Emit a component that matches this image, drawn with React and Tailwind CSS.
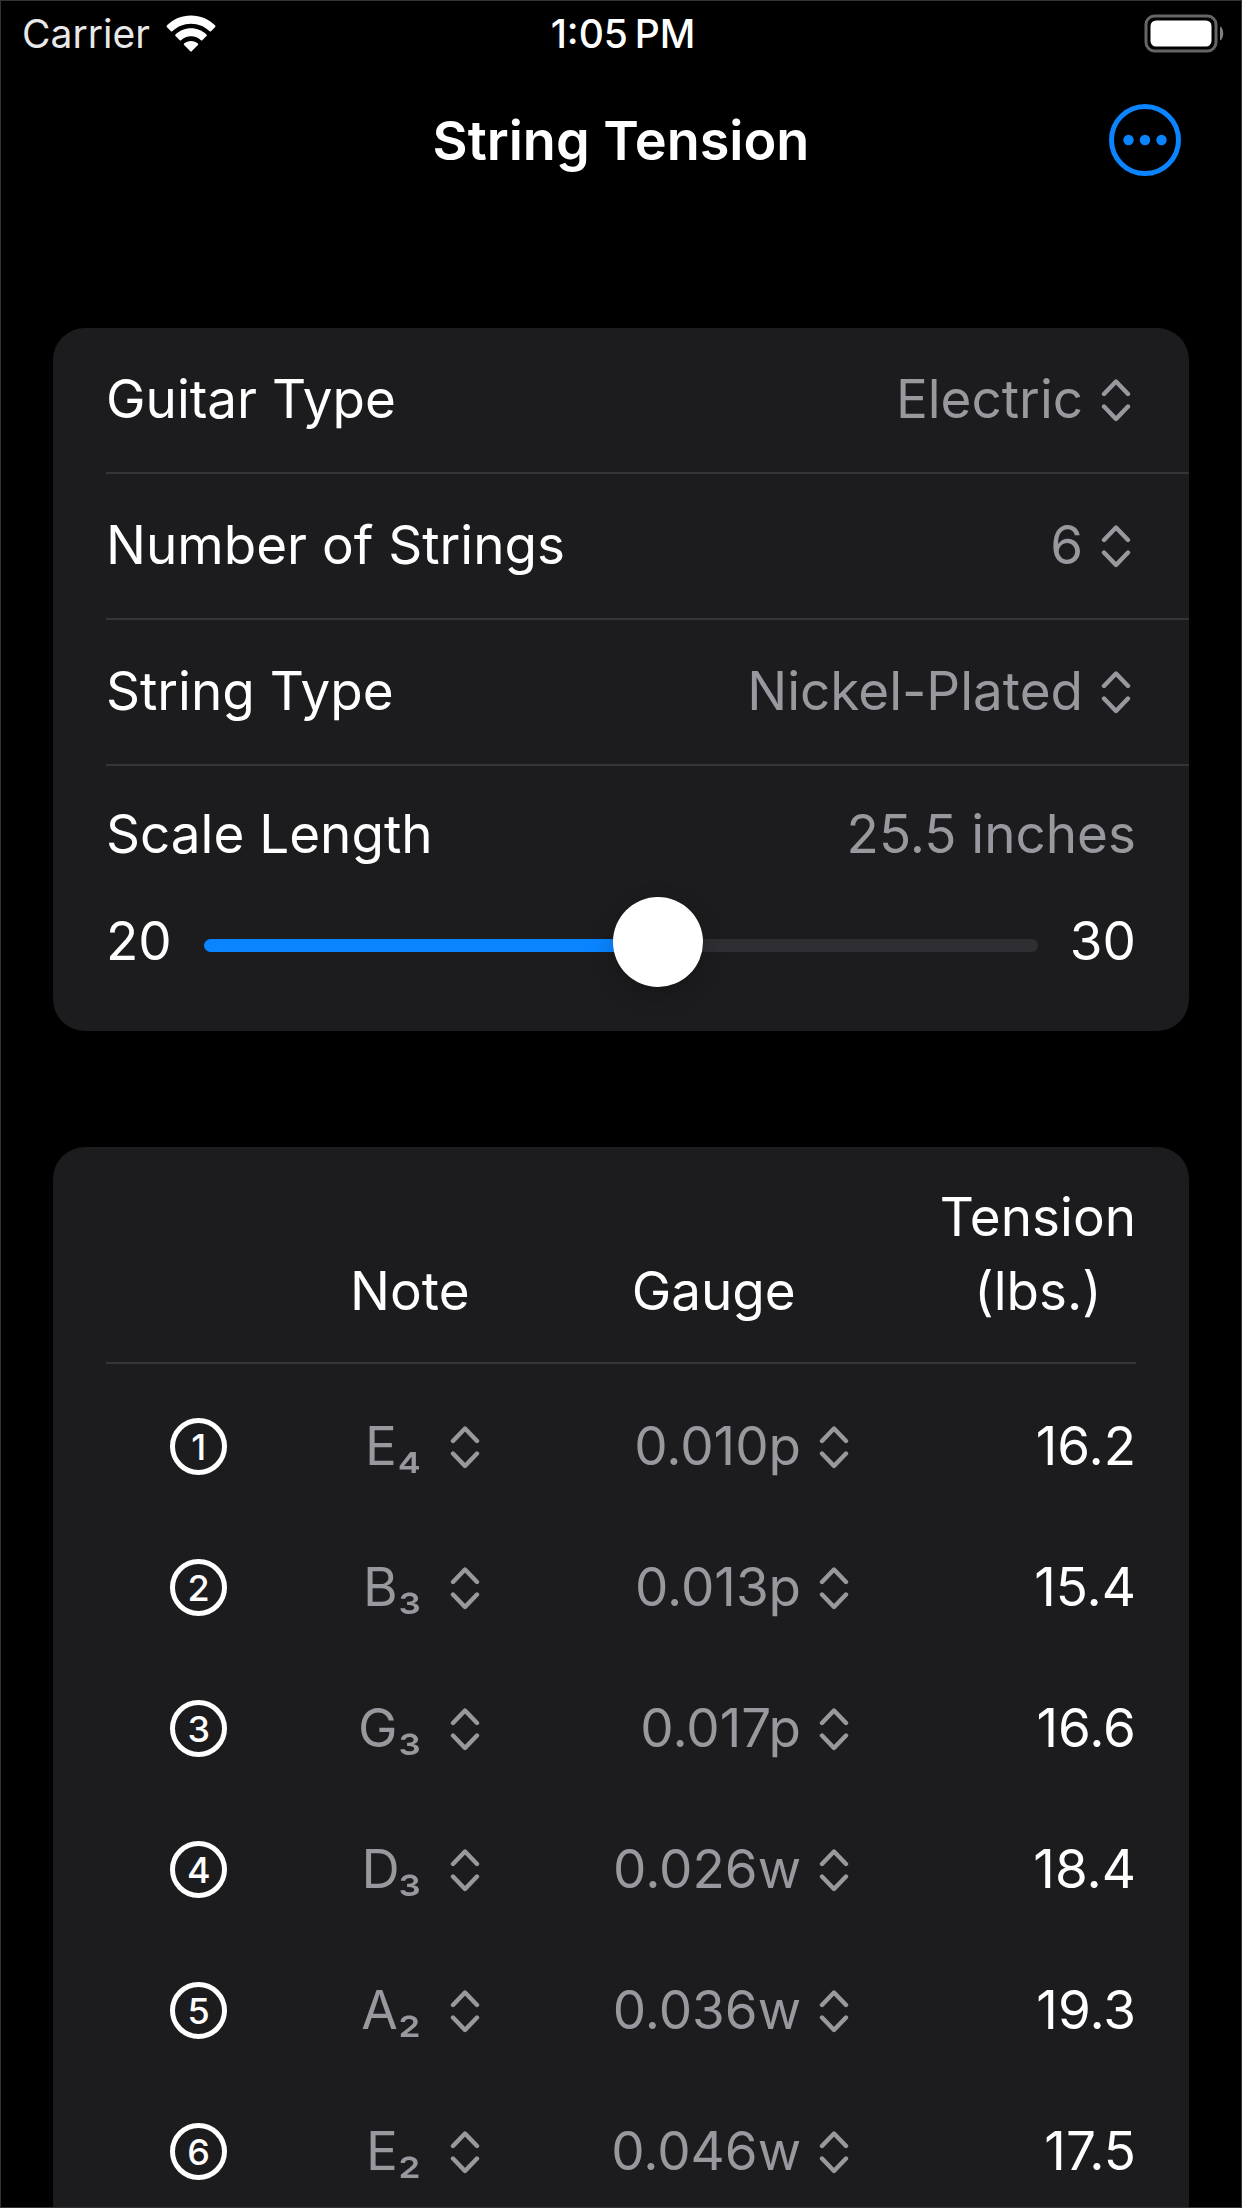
import { useState } from "react";

const noteOptions = ["E₂", "A₂", "D₃", "G₃", "B₃", "E₄"];
const gaugeOptions = ["0.010p", "0.013p", "0.017p", "0.026w", "0.036w", "0.046w"];

const strings = [
  { number: 1, note: "E₄", gauge: "0.010p", tension: "16.2" },
  { number: 2, note: "B₃", gauge: "0.013p", tension: "15.4" },
  { number: 3, note: "G₃", gauge: "0.017p", tension: "16.6" },
  { number: 4, note: "D₃", gauge: "0.026w", tension: "18.4" },
  { number: 5, note: "A₂", gauge: "0.036w", tension: "19.3" },
  { number: 6, note: "E₂", gauge: "0.046w", tension: "17.5" },
];

function WifiIcon() {
  return (
    <svg width="50" height="38" viewBox="0 0 50 38" fill="#fff" aria-hidden="true">
      <path d="M25 0.5C34.300 0.500 42.900 4.200 49 10.300Q50 11.300 49 12.300L45 16.300Q44.400 16.900 43.700 16.300C38.800 11.500 32.200 8.700 25 8.700C17.800 8.700 11.200 11.500 6.300 16.300Q5.600 16.900 5 16.300L1 12.300Q0 11.300 1 10.300C7.100 4.200 15.700 0.500 25 0.500Z" />
      <path d="M25 13.300C31 13.300 36.500 15.700 40.500 19.500Q41.300 20.300 40.500 21.100L36.300 25.200Q35.600 25.800 34.900 25.200C32.300 22.800 28.800 21.300 25 21.300C21.200 21.300 17.700 22.800 15.100 25.200Q14.400 25.800 13.700 25.200L9.500 21.100Q8.700 20.300 9.500 19.500C13.500 15.700 19 13.300 25 13.300Z" />
      <path d="M25 26C27.700 26 30.100 27 31.900 28.600Q32.600 29.300 31.900 30L25.700 36.300Q25 37 24.300 36.300L18.100 30Q17.400 29.300 18.100 28.600C19.900 27 22.300 26 25 26Z" />
    </svg>
  );
}

function BatteryIcon() {
  return (
    <svg width="80" height="40" viewBox="0 0 80 40" role="img" aria-label="Battery full">
      <rect x="2" y="2" width="70" height="35" rx="8.500" fill="none" stroke="#666" strokeWidth="3" />
      <rect x="6.500" y="6.500" width="61" height="26" rx="5.500" fill="#fff" />
      <path d="M76 12.500C80.300 14.500 80.300 24.500 76 26.500Z" fill="#808080" />
    </svg>
  );
}

function MoreIcon() {
  return (
    <svg width="72" height="72" viewBox="0 0 72 72" aria-hidden="true">
      <circle cx="36" cy="36" r="33.500" fill="none" stroke="#0a84ff" strokeWidth="5" />
      <circle cx="19.500" cy="36" r="5.200" fill="#0a84ff" />
      <circle cx="36" cy="36" r="5.200" fill="#0a84ff" />
      <circle cx="52.500" cy="36" r="5.200" fill="#0a84ff" />
    </svg>
  );
}

function ChevronsIcon() {
  return (
    <svg
      className="pointer-events-none absolute right-[5px]"
      width="30"
      height="44"
      viewBox="0 0 30 44"
      fill="none"
      stroke="#98989f"
      strokeWidth="4.4"
      strokeLinecap="round"
      strokeLinejoin="round"
      aria-hidden="true"
    >
      <path d="M3 16L15 3.500L27 16" />
      <path d="M3 28.500L15 41L27 28.500" />
    </svg>
  );
}

function Picker({ id, label, value, options, wide = false }) {
  const [selected, setSelected] = useState(value);
  return (
    <span className="relative inline-flex items-center">
      <select
        id={id}
        aria-label={label}
        value={selected}
        onChange={(e) => setSelected(e.target.value)}
        className={`field-sizing-content cursor-pointer appearance-none bg-transparent text-right text-[#98989f] outline-none ${wide ? "pr-[64px]" : "pr-[53px]"}`}
      >
        {options.map((option) => (
          <option key={option}>{option}</option>
        ))}
      </select>
      <ChevronsIcon />
    </span>
  );
}

function SettingRow({ id, label, value, options }) {
  return (
    <div className="ml-[53px] flex h-[146px] items-center justify-between border-b-2 border-[#343437] pr-[53px]">
      <label htmlFor={id}>{label}</label>
      <Picker id={id} value={value} options={options} />
    </div>
  );
}

function ScaleLength() {
  const [length, setLength] = useState(25.5);
  const filled = (length - 20) * 10;
  return (
    <div className="px-[53px] pt-9 pb-11">
      <div className="flex items-center justify-between leading-[64px]">
        <label htmlFor="scale">Scale Length</label>
        <output htmlFor="scale" className="text-[#98989f]">{length} inches</output>
      </div>
      <div className="mt-[31px] flex h-[90px] items-center gap-8">
        <span>20</span>
        <input
          id="scale"
          type="range"
          min="20"
          max="30"
          step="0.5"
          value={length}
          onChange={(e) => setLength(Number(e.target.value))}
          style={{ "--track": `linear-gradient(to right, #0a84ff ${filled}%, #2f2f33 ${filled}%)` }}
          className="h-[90px] min-w-0 flex-1 cursor-pointer appearance-none bg-transparent pt-[6px] outline-none [&::-webkit-slider-runnable-track]:h-[13px] [&::-webkit-slider-runnable-track]:rounded-full [&::-webkit-slider-runnable-track]:[background:var(--track)] [&::-webkit-slider-thumb]:-mt-[42px] [&::-webkit-slider-thumb]:size-[90px] [&::-webkit-slider-thumb]:appearance-none [&::-webkit-slider-thumb]:rounded-full [&::-webkit-slider-thumb]:bg-white [&::-webkit-slider-thumb]:shadow-[0_8px_24px_rgba(0,0,0,0.2)]"
        />
        <span>30</span>
      </div>
    </div>
  );
}

export default function App() {
  return (
    <div className="flex h-screen flex-col overflow-hidden border border-[#333] bg-black font-['Inter',sans-serif] text-[53px] text-white">
      <div className="grid h-[66px] shrink-0 grid-cols-[1fr_auto_1fr] items-center pr-[17px] pl-[21px] text-[39px]">
        <div className="flex items-center gap-4">
          <span className="text-[#e8e8e8]">Carrier</span>
          <WifiIcon />
        </div>
        <span className="font-medium">1:05{"\u2009"}PM</span>
        <div className="flex justify-end">
          <BatteryIcon />
        </div>
      </div>

      <header className="grid h-[146px] shrink-0 grid-cols-[1fr_auto_1fr] items-center px-[60px]">
        <h1 className="col-start-2 text-[54px] font-semibold">String Tension</h1>
        <button type="button" aria-label="More" className="cursor-pointer justify-self-end">
          <MoreIcon />
        </button>
      </header>

      <main className="flex min-h-0 flex-1 flex-col gap-[116px] overflow-y-auto px-[52px] pt-[115px] [scrollbar-width:none]">
        <section className="shrink-0 rounded-[32px] bg-[#1c1c1e]">
          <SettingRow id="guitar" label="Guitar Type" value="Electric" options={["Electric", "Acoustic"]} />
          <SettingRow id="count" label="Number of Strings" value="6" options={["6", "7", "8"]} />
          <SettingRow id="type" label="String Type" value="Nickel-Plated" options={["Nickel-Plated", "Pure Nickel"]} />
          <ScaleLength />
        </section>

        <section className="shrink-0 rounded-[32px] bg-[#1c1c1e] px-[53px] pt-[33px] pb-3">
          <table className="w-full table-fixed">
            <colgroup>
              <col className="w-[18%]" />
              <col className="w-[23%]" />
              <col className="w-[36%]" />
              <col className="w-[23%]" />
            </colgroup>
            <thead className="border-b-2 border-[#343437] leading-[74px]">
              <tr className="align-bottom">
                <td />
                <th scope="col" className="pb-[34px] font-normal">Note</th>
                <th scope="col" className="pb-[34px] font-normal">Gauge</th>
                <th scope="col" className="pb-[34px] font-normal">
                  <span className="flex justify-end">
                    <span>
                      Tension
                      <br />
                      (lbs.)
                    </span>
                  </span>
                </th>
              </tr>
            </thead>
            <tbody className="before:block before:h-3">
              {strings.map((s) => (
                <tr key={s.number} className="h-[141px]">
                  <th scope="row" className="font-medium">
                    <span className="mx-auto flex size-[57px] items-center justify-center rounded-full border-5 border-white text-[36px] leading-none">
                      {s.number}
                    </span>
                  </th>
                  <td className="pr-[43px] text-right">
                    <Picker wide label={`Note of string ${s.number}`} value={s.note} options={noteOptions} />
                  </td>
                  <td className="pr-[45px] text-right">
                    <Picker label={`Gauge of string ${s.number}`} value={s.gauge} options={gaugeOptions} />
                  </td>
                  <td className="text-right">{s.tension}</td>
                </tr>
              ))}
            </tbody>
          </table>
        </section>
      </main>
    </div>
  );
}
